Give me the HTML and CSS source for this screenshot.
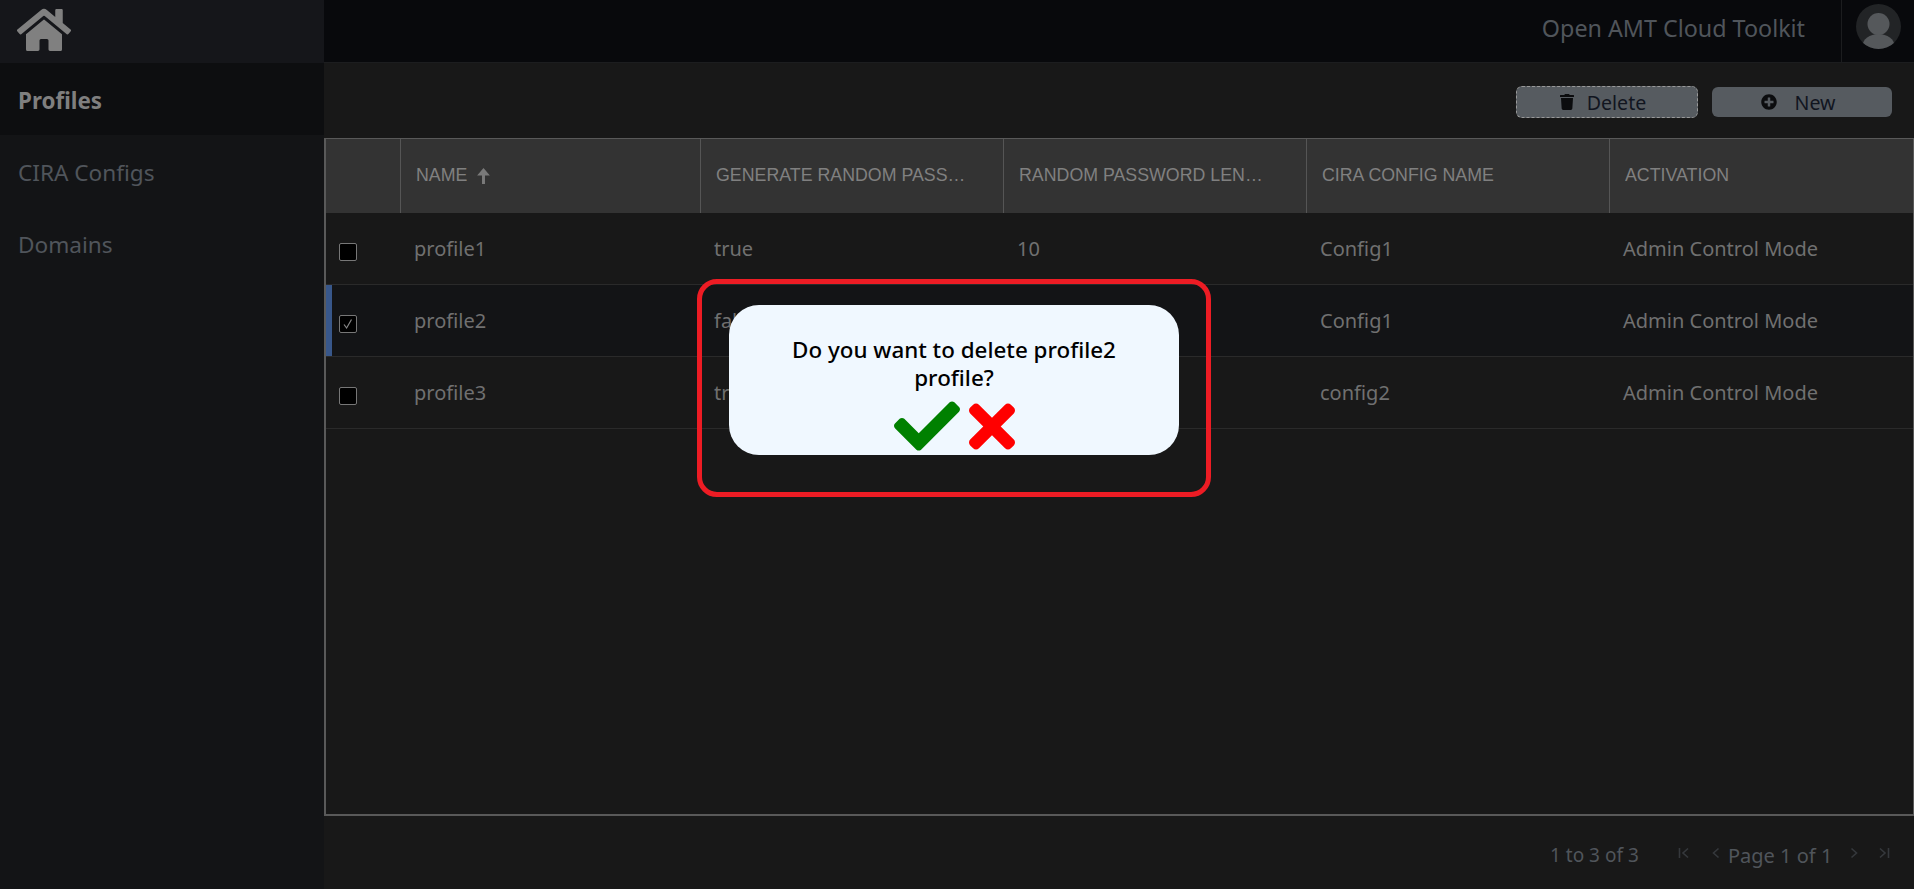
FILE: index.html
```html
<!DOCTYPE html>
<html>
<head>
  <meta charset="utf-8">
  <meta name="viewport" content="width=device-width">
  <title>Open AMT Cloud Toolkit</title>
  <link rel="stylesheet" href="styles.css">
</head>
<body>
 <div id="app">
  <aside class="sidebar">
   <div class="logo">
    <svg class="home-icon" viewBox="0 0 576 512"><path d="M280.37 148.26L96 300.11V464a16 16 0 0 0 16 16l112.06-.29a16 16 0 0 0 15.92-16V368a16 16 0 0 1 16-16h64a16 16 0 0 1 16 16v95.64a16 16 0 0 0 16 16.05L464 480a16 16 0 0 0 16-16V300L295.67 148.26a12.19 12.19 0 0 0-15.3 0zM571.6 251.47L488 182.56V44.05a12 12 0 0 0-12-12h-56a12 12 0 0 0-12 12v72.61L318.47 43a48 48 0 0 0-61 0L4.34 251.47a12 12 0 0 0-1.6 16.9l25.5 31A12 12 0 0 0 45.15 301l235.22-193.74a12.19 12.19 0 0 1 15.3 0L530.9 301a12 12 0 0 0 16.9-1.6l25.5-31a12 12 0 0 0-1.7-16.93z"/></svg>
   </div>
   <a class="nav-item active">Profiles</a>
   <a class="nav-item">CIRA Configs</a>
   <a class="nav-item">Domains</a>
  </aside>
  <div class="content">
   <header class="topbar">
    <span class="app-title">Open AMT Cloud Toolkit</span>
    <div class="user-box">
     <svg class="avatar" viewBox="0 0 45 45">
      <circle cx="22.5" cy="22.5" r="22.5" fill="#222426"/>
      <clipPath id="avatar-clip"><circle cx="22.5" cy="22.5" r="22.5"/></clipPath>
      <g clip-path="url(#avatar-clip)" fill="#55585b">
       <ellipse cx="22.5" cy="20" rx="11" ry="11"/>
       <ellipse cx="22.5" cy="42" rx="16" ry="12"/>
      </g>
     </svg>
    </div>
   </header>
   <div class="toolbar">
    <button class="btn btn-focus">
     <svg class="btn-icon trash" viewBox="0 0 448 512"><path d="M432 32H312l-9.4-18.7A24 24 0 0 0 281.1 0H166.8a23.72 23.72 0 0 0-21.4 13.3L136 32H16A16 16 0 0 0 0 48v32a16 16 0 0 0 16 16h416a16 16 0 0 0 16-16V48a16 16 0 0 0-16-16zM53.2 467a48 48 0 0 0 47.9 45h245.8a48 48 0 0 0 47.9-45L416 128H32z"/></svg>
     Delete
    </button>
    <button class="btn btn-new">
     <svg class="btn-icon plus" viewBox="0 0 512 512"><path d="M256 8C119 8 8 119 8 256s111 248 248 248 248-111 248-248S393 8 256 8zm144 276c0 6.6-5.4 12-12 12h-92v92c0 6.6-5.4 12-12 12h-56c-6.6 0-12-5.4-12-12v-92h-92c-6.6 0-12-5.4-12-12v-56c0-6.6 5.4-12 12-12h92v-92c0-6.6 5.4-12 12-12h56c6.6 0 12 5.4 12 12v92h92c6.6 0 12 5.4 12 12v56z"/></svg>
     New
    </button>
   </div>
   <div class="grid-frame">
    <div class="grid-row grid-head">
     <div class="cell"></div>
     <div class="cell"><span class="head-label">Name</span>
      <svg class="sort-arrow" viewBox="0 0 14 16"><path d="M7 1L1 8h4.6v8h2.8V8H13z"/></svg>
     </div>
     <div class="cell"><span class="head-label">Generate Random Password</span></div>
     <div class="cell"><span class="head-label">Random Password Length</span></div>
     <div class="cell"><span class="head-label">CIRA Config Name</span></div>
     <div class="cell"><span class="head-label">Activation</span></div>
    </div>
    <div class="grid-row body-row">
     <div class="cell check-cell"><span class="check"></span></div>
     <div class="cell">profile1</div>
     <div class="cell">true</div>
     <div class="cell">10</div>
     <div class="cell">Config1</div>
     <div class="cell">Admin Control Mode</div>
    </div>
    <div class="grid-row body-row selected">
     <div class="cell check-cell"><span class="check">
      <svg viewBox="0 0 16 16"><path d="M4 8.5l2.6 3.5L11.5 3.5"/></svg>
     </span></div>
     <div class="cell">profile2</div>
     <div class="cell">false</div>
     <div class="cell"></div>
     <div class="cell">Config1</div>
     <div class="cell">Admin Control Mode</div>
    </div>
    <div class="grid-row body-row">
     <div class="cell check-cell"><span class="check"></span></div>
     <div class="cell">profile3</div>
     <div class="cell">true</div>
     <div class="cell"></div>
     <div class="cell">config2</div>
     <div class="cell">Admin Control Mode</div>
    </div>
   </div>
   <footer class="pager">
    <span class="pager-count">1 to 3 of 3</span>
    <svg class="pager-icon first" viewBox="0 0 12 12"><path d="M1.5 1v10M10 1.5L5 6l5 4.5"/></svg>
    <svg class="pager-icon prev" viewBox="0 0 12 12"><path d="M8.5 1.5L3.5 6l5 4.5"/></svg>
    <span class="pager-page">Page 1 of 1</span>
    <svg class="pager-icon next" viewBox="0 0 12 12"><path d="M3.5 1.5L8.5 6l-5 4.5"/></svg>
    <svg class="pager-icon last" viewBox="0 0 12 12"><path d="M2 1.5L7 6l-5 4.5M10.5 1v10"/></svg>
   </footer>
  </div>
 </div>

 <div class="confirm-ring">
  <div class="confirm-card">
   <p class="confirm-text">Do you want to delete profile2 profile?</p>
   <div class="confirm-actions">
    <svg class="yes" viewBox="0 0 512 512"><path d="M173.898 439.404l-166.4-166.4c-9.997-9.997-9.997-26.206 0-36.204l36.203-36.204c9.997-9.998 26.207-9.998 36.204 0L192 312.69 432.095 72.596c9.997-9.997 26.207-9.997 36.204 0l36.203 36.204c9.997 9.997 9.997 26.206 0 36.204l-294.4 294.401c-9.998 9.997-26.207 9.997-36.204-.001z"/></svg>
    <svg class="no" viewBox="0 0 352 512"><path d="M242.72 256l100.07-100.07c12.28-12.28 12.28-32.19 0-44.48l-22.24-22.24c-12.28-12.28-32.19-12.28-44.48 0L176 189.28 75.93 89.21c-12.28-12.28-32.19-12.28-44.48 0L9.21 111.45c-12.28 12.28-12.28 32.19 0 44.48L109.28 256 9.21 356.07c-12.28 12.28-12.28 32.19 0 44.48l22.24 22.24c12.28 12.28 32.2 12.28 44.48 0L176 322.72l100.07 100.07c12.28 12.28 32.2 12.28 44.48 0l22.24-22.24c12.28-12.28 12.28-32.19 0-44.48L242.72 256z"/></svg>
   </div>
  </div>
 </div>
</body>
</html>
```

FILE: styles.css
```css
*,*:before,*:after {box-sizing:border-box;}
html,body{
 height:100%;
}
body{
 margin:0;
 padding:0;
 overflow:hidden;
 background:#181818;
 font-family:"Noto Sans","Open Sans",sans-serif;
 position:relative;
}
#app{
 display:flex;
 height:100%;
}

/* left menu */
.sidebar{
 width:324px;
 flex:none;
 background:#131416;
 display:flex;
 flex-direction:column;
}
.logo{
 height:63px;
 padding:6px 0 0 17px;
 background:#15161a;
}
.home-icon{
 display:block;
 width:54px;
 height:48px;
 fill:#808080;
}
.nav-item{
 height:72px;
 padding:2px 0 0 18px;
 display:flex;
 align-items:center;
 font-size:22.6px;
 color:#50555b;
}
.nav-item.active{
 background:#0d0e10;
 color:#7f7f7f;
 font-size:22.4px;
 font-weight:700;
}

/* right side */
.content{
 flex:1;
 min-width:0;
 display:flex;
 flex-direction:column;
}
.topbar{
 height:63px;
 flex:none;
 background:#08090c;
 border-bottom:1px solid #1c1d1f;
 display:flex;
 justify-content:flex-end;
}
.app-title{
 font-size:23.3px;
 line-height:56px;
 color:#50555b;
 margin-right:36px;
}
.user-box{
 width:73px;
 border-left:1px solid #1c1d1f;
 padding:4px 0 0 14px;
}
.avatar{
 display:block;
 width:45px;
 height:45px;
}
.toolbar{
 height:75px;
 flex:none;
 display:flex;
 justify-content:flex-end;
 align-items:center;
 gap:14px;
 padding:2px 22px 0 0;
}
.btn{
 height:30px;
 width:180px;
 border:0;
 border-radius:6px;
 background:#565b60;
 color:#11151f;
 font-family:inherit;
 font-size:19.6px;
 padding:2px 8px 0 0;
 display:flex;
 align-items:center;
 justify-content:center;
}
.btn-focus{
 width:182px;
 height:32px;
 border:1px dashed #999;
}
.btn-icon{
 fill:#0b0c0e;
 display:block;
 margin-top:-1px;
}
.trash{
 width:14px;
 height:16px;
 margin-right:13px;
}
.plus{
 width:16px;
 height:16px;
 margin-right:18px;
}

/* table */
.grid-frame{
 flex:1;
 min-height:0;
 border:1px solid #595959;
 border-left-width:2px;
 border-bottom-width:2px;
 background:#181818;
}
.grid-row{
 display:grid;
 grid-template-columns:74px 300px 303px 303px 303px 1fr;
}
.cell{
 padding:0 14px;
 display:flex;
 align-items:center;
 min-width:0;
}
.grid-head{
 height:74px;
 background:#333333;
}
.grid-head .cell{
 border-left:1px solid #555555;
 padding:0 35px 1px 15px;
 font-family:"Liberation Sans",Arial,sans-serif;
 font-size:17.8px;
 color:#808080;
 text-transform:uppercase;
}
.grid-head .cell:first-child{
 border-left:0;
}
.head-label{
 overflow:hidden;
 white-space:nowrap;
 text-overflow:ellipsis;
}
.sort-arrow{
 width:15px;
 height:17px;
 margin-left:9px;
 flex:none;
 fill:#7a7a7a;
}
.body-row{
 height:72px;
 border-bottom:1px solid #2a2a2a;
 font-size:20px;
 color:#707070;
 padding-bottom:1px;
}
.body-row.selected{
 background:#131416;
 box-shadow:inset 6px 0 0 #38578a;
}
.check-cell{
 padding:7px 0 0 13px;
}
.check{
 width:18px;
 height:18px;
 background:#000;
 border:1px solid #777;
 border-radius:2px;
 display:block;
}
.check svg{
 display:block;
 width:16px;
 height:16px;
 fill:none;
 stroke:#888;
 stroke-width:1.2;
}

/* pager */
.pager{
 height:73px;
 flex:none;
 display:flex;
 align-items:center;
 font-size:19px;
 color:#50555b;
 padding:5px 0 0 1226px;
}
.pager-count{
 width:128px;
}
.pager-page{
 margin:0 16px 0 6px;
 font-size:20px;
}
.pager-icon{
 width:12px;
 height:12px;
 fill:none;
 stroke:#35383c;
 stroke-width:1.6;
 margin-top:-4px;
}
.pager-icon.first{
 margin-right:20px;
}
.pager-icon.next{
 margin-right:18px;
}

/* delete dialog */
.confirm-ring{
 position:absolute;
 left:697px;
 top:279px;
 width:514px;
 height:218px;
 border:5px solid #ed1c24;
 border-radius:20px;
}
.confirm-card{
 position:absolute;
 left:27px;
 top:21px;
 width:450px;
 height:150px;
 background:#f0f8ff;
 border-radius:30px;
 padding-top:31px;
 text-align:center;
}
.confirm-text{
 margin:0 auto;
 width:360px;
 font-size:22.4px;
 line-height:28px;
 font-weight:500;
 color:#000;
}
.confirm-actions{
 display:flex;
 justify-content:center;
 align-items:center;
 gap:9px;
 height:52px;
 margin-top:8px;
 padding-left:1px;
}
.yes{
 width:66px;
 height:66px;
 fill:green;
}
.no{
 width:46px;
 height:67px;
 fill:red;
}
```
